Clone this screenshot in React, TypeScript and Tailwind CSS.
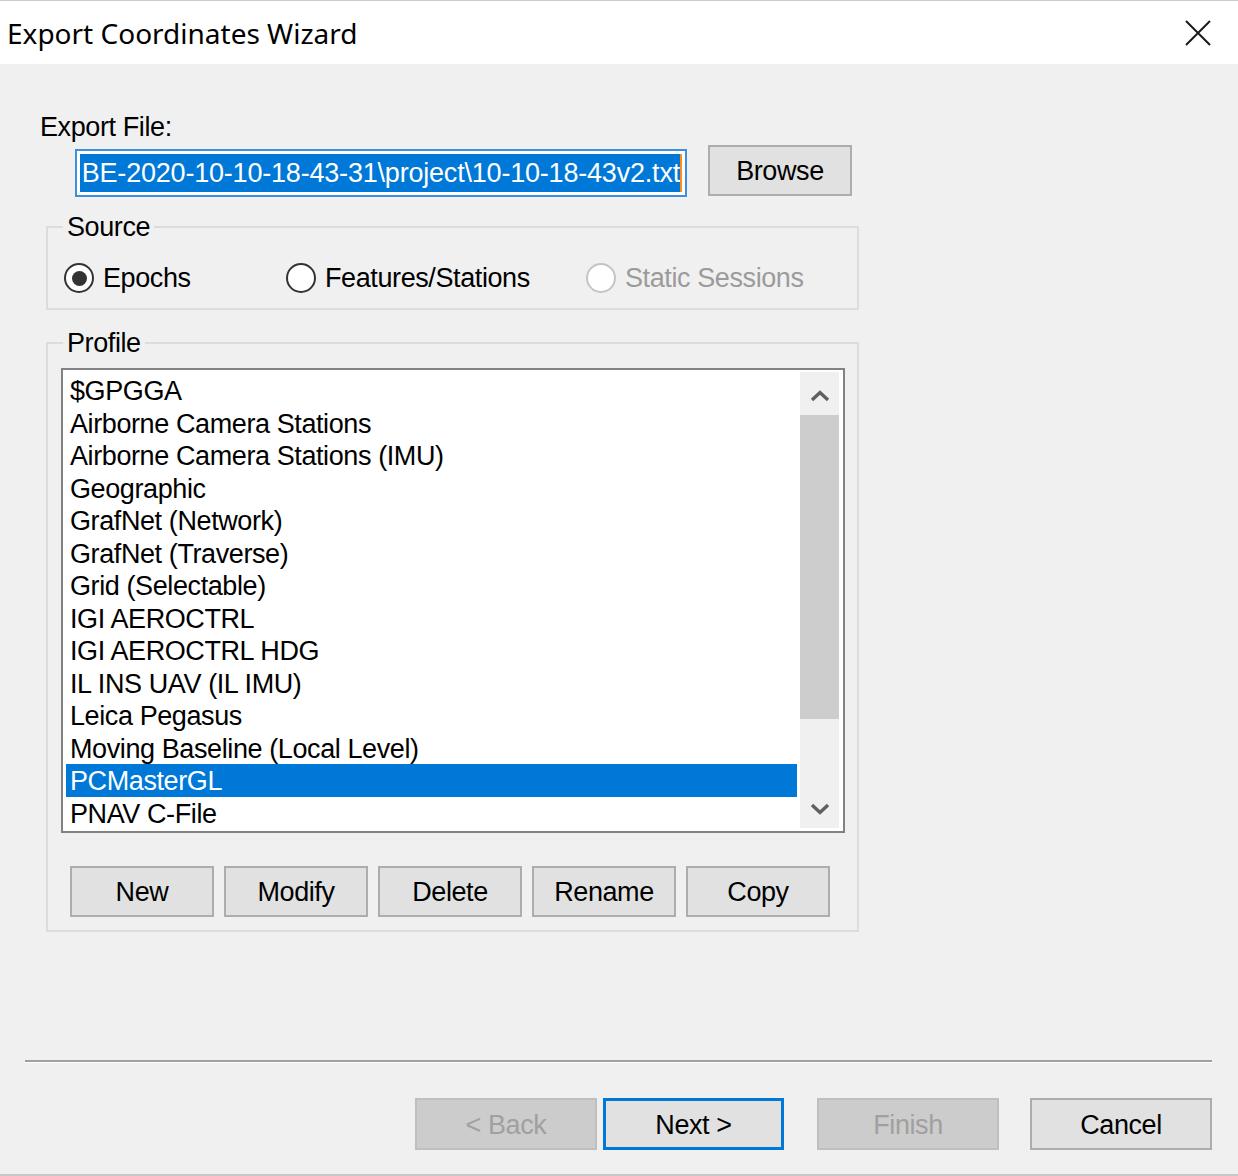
import React from 'react';

const profiles = [
  '$GPGGA',
  'Airborne Camera Stations',
  'Airborne Camera Stations (IMU)',
  'Geographic',
  'GrafNet (Network)',
  'GrafNet (Traverse)',
  'Grid (Selectable)',
  'IGI AEROCTRL',
  'IGI AEROCTRL HDG',
  'IL INS UAV (IL IMU)',
  'Leica Pegasus',
  'Moving Baseline (Local Level)',
  'PCMasterGL',
  'PNAV C-File',
];

const Radio: React.FC<{ checked?: boolean; disabled?: boolean; label: string; width: string }> = ({
  checked,
  disabled,
  label,
  width,
}) => (
  <div className={`flex items-center ${width}`}>
    <div
      className={`w-[30px] h-[30px] rounded-full border-2 bg-white flex items-center justify-center shrink-0 ${
        disabled ? 'border-[#c4c4c4]' : 'border-[#333333]'
      }`}
    >
      {checked && <div className="w-[15px] h-[15px] rounded-full bg-[#333333]" />}
    </div>
    <span className={`ml-[9px] ${disabled ? 'text-[#9b9b9b]' : 'text-black'}`}>{label}</span>
  </div>
);

const Button: React.FC<{ label: string; w: string; disabled?: boolean; focused?: boolean; h?: string }> = ({
  label,
  w,
  disabled,
  focused,
  h = 'h-[51px]',
}) => (
  <button
    className={`${w} ${h} flex items-center justify-center shrink-0 pt-[2px] ${
      disabled
        ? 'bg-[#cccccc] border-2 border-[#bfbfbf] text-[#a0a0a0]'
        : focused
        ? 'bg-[#e1e1e1] border-[3px] border-[#0078d7] text-black'
        : 'bg-[#e1e1e1] border-2 border-[#adadad] text-black'
    }`}
  >
    {label}
  </button>
);

const Chevron: React.FC<{ up?: boolean }> = ({ up }) => (
  <svg width="20" height="12" viewBox="0 0 20 12">
    <path
      d={up ? 'M2 10 L10 2.5 L18 10' : 'M2 2 L10 9.5 L18 2'}
      fill="none"
      stroke="#606060"
      strokeWidth="3.4"
    />
  </svg>
);

export default function App() {
  return (
    <div
      className="w-[1238px] h-[1176px] flex flex-col bg-[#f0f0f0] border-t border-[#cccccc] text-[27px] tracking-[-0.4px] text-black overflow-hidden"
      style={{ fontFamily: '"Liberation Sans", Arial, sans-serif' }}
    >
      {/* title bar */}
      <div className="h-[63px] bg-white flex items-center justify-between pl-[7px] pr-[26px] shrink-0">
        <span
          className="text-[28px] tracking-normal text-black"
          style={{ fontFamily: '"Noto Sans", "Open Sans", sans-serif' }}
        >
          Export Coordinates Wizard
        </span>
        <svg width="28" height="28" viewBox="0 0 28 28">
          <path d="M2 2 L26 26 M26 2 L2 26" stroke="#1a1a1a" strokeWidth="2" />
        </svg>
      </div>

      {/* body */}
      <div className="flex-1 flex flex-col border-b-2 border-[#c8c8c8]">
        <div className="pl-[40px] pt-[47px]">
          <div className="leading-[32px]">Export File:</div>
          <div className="flex items-start mt-[2px]">
            <div className="ml-[35px] mt-[4px] w-[612px] h-[48px] border-2 border-[#3d8fe0] bg-white p-[3px] flex">
              <div className="flex-1 bg-[#0078d7] overflow-hidden flex justify-end items-center">
                <span className="text-white whitespace-nowrap leading-[32px] tracking-[-0.2px]">
                  BE-2020-10-10-18-43-31\project\10-10-18-43v2.txt
                </span>
              </div>
              <div className="w-[2px] bg-[#ff8c1a]" />
            </div>
            <div className="ml-[21px]">
              <Button label="Browse" w="w-[144px]" />
            </div>
          </div>

          <fieldset className="ml-[6px] mt-[14px] w-[813px] border-2 border-[#dcdcdc] pb-[14px]">
            <legend className="ml-[15px] px-[4px] leading-[32px]">Source</legend>
            <div className="flex items-center pt-[19px] pl-[16px] leading-[32px]">
              <Radio checked label="Epochs" width="w-[222px]" />
              <Radio label="Features/Stations" width="w-[300px]" />
              <Radio disabled label="Static Sessions" width="w-[260px]" />
            </div>
          </fieldset>

          <fieldset className="ml-[6px] mt-[17px] w-[813px] border-2 border-[#dcdcdc] pb-[13px]">
            <legend className="ml-[15px] px-[4px] leading-[32px]">Profile</legend>
            <div className="ml-[13px] mt-[9px] w-[784px] h-[465px] border-2 border-[#828282] bg-white flex p-[3px] pr-[4px] pt-[2px]">
              <div className="flex-1 mr-[3px] overflow-hidden flex flex-col pt-[2px]">
                {profiles.map((p) => (
                  <div
                    key={p}
                    className={`h-[32.5px] leading-[34.5px] pl-[4px] whitespace-nowrap shrink-0 ${
                      p === 'PCMasterGL' ? 'bg-[#0078d7] text-white' : 'text-black'
                    }`}
                  >
                    {p}
                  </div>
                ))}
              </div>
              <div className="w-[39px] bg-[#f0f0f0] flex flex-col">
                <div className="h-[43px] flex items-center justify-center pt-[4px]">
                  <Chevron up />
                </div>
                <div className="h-[304px] bg-[#cdcdcd]" />
                <div className="flex-1" />
                <div className="h-[43px] flex items-center justify-center pt-[4px]">
                  <Chevron />
                </div>
              </div>
            </div>
            <div className="flex gap-[10px] ml-[22px] mt-[33px]">
              <Button label="New" w="w-[144px]" />
              <Button label="Modify" w="w-[144px]" />
              <Button label="Delete" w="w-[144px]" />
              <Button label="Rename" w="w-[144px]" />
              <Button label="Copy" w="w-[144px]" />
            </div>
          </fieldset>
        </div>

        <div className="flex-1" />
        <div className="mx-[25px] w-[1187px] border-t-2 border-[#a0a0a0] border-b border-b-white" />
        <div className="flex justify-end pr-[26px] mt-[35px] mb-[24px]">
          <Button label="< Back" w="w-[182px]" h="h-[52px]" disabled />
          <div className="ml-[6px]">
            <Button label="Next >" w="w-[181px]" h="h-[52px]" focused />
          </div>
          <div className="ml-[33px]">
            <Button label="Finish" w="w-[182px]" h="h-[52px]" disabled />
          </div>
          <div className="ml-[31px]">
            <Button label="Cancel" w="w-[182px]" h="h-[52px]" />
          </div>
        </div>
      </div>
    </div>
  );
}
